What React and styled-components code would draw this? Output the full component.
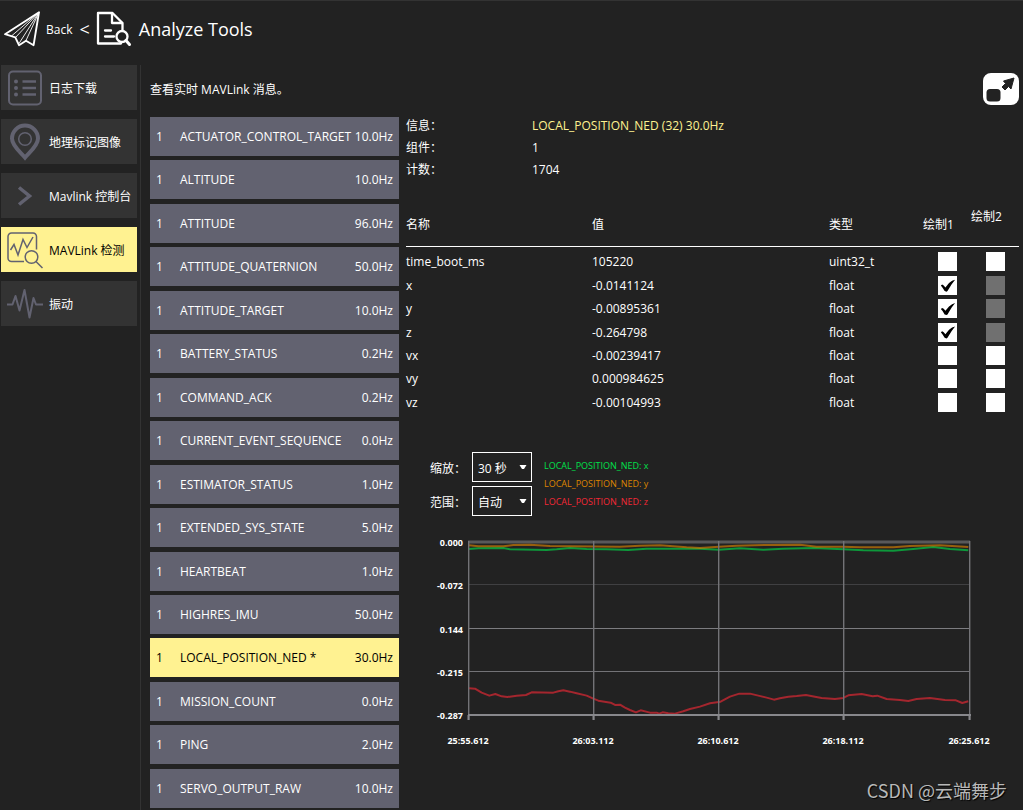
import { useState } from "react";
import styled, { createGlobalStyle } from "styled-components";

const messages = [
    { name: "ACTUATOR_CONTROL_TARGET", rate: "10.0Hz" },
    { name: "ALTITUDE", rate: "10.0Hz" },
    { name: "ATTITUDE", rate: "96.0Hz" },
    { name: "ATTITUDE_QUATERNION", rate: "50.0Hz" },
    { name: "ATTITUDE_TARGET", rate: "10.0Hz" },
    { name: "BATTERY_STATUS", rate: "0.2Hz" },
    { name: "COMMAND_ACK", rate: "0.2Hz" },
    { name: "CURRENT_EVENT_SEQUENCE", rate: "0.0Hz" },
    { name: "ESTIMATOR_STATUS", rate: "1.0Hz" },
    { name: "EXTENDED_SYS_STATE", rate: "5.0Hz" },
    { name: "HEARTBEAT", rate: "1.0Hz" },
    { name: "HIGHRES_IMU", rate: "50.0Hz" },
    { name: "LOCAL_POSITION_NED *", rate: "30.0Hz" },
    { name: "MISSION_COUNT", rate: "0.0Hz" },
    { name: "PING", rate: "2.0Hz" },
    { name: "SERVO_OUTPUT_RAW", rate: "10.0Hz" },
];

const fields = [
    { name: "time_boot_ms", value: "105220", type: "uint32_t" },
    { name: "x", value: "-0.0141124", type: "float", plotted: true },
    { name: "y", value: "-0.00895361", type: "float", plotted: true },
    { name: "z", value: "-0.264798", type: "float", plotted: true },
    { name: "vx", value: "-0.00239417", type: "float" },
    { name: "vy", value: "0.000984625", type: "float" },
    { name: "vz", value: "-0.00104993", type: "float" },
];

const series = [
    {
        label: "LOCAL_POSITION_NED: x",
        color: "#00e04b",
        points: "147,57 175,55 250,54 270,58 380,60 410,58 450,54 500,57 560,58 625,60 680,56 800,56 840,56 897,59 960,55 1030,59 1090,56 1180,54 1270,58 1330,61 1420,62 1480,57 1540,51 1590,57 1645,61",
    },
    {
        label: "LOCAL_POSITION_NED: y",
        color: "#de8500",
        points: "147,46 175,49 250,49 280,45 330,44 390,48 450,49 600,50 660,47 720,46 800,52 840,54 897,50 950,47 1040,45 1140,44 1190,50 1270,50 1320,52 1420,52 1470,48 1560,46 1645,51",
    },
    {
        label: "LOCAL_POSITION_NED: z",
        color: "#f32836",
        points: "147,475 165,476 185,488 208,497 226,492 245,499 262,501 290,497 318,495 335,487 400,488 415,484 430,481 450,485 470,490 500,497 520,506 535,512 572,518 585,525 600,524 615,533 630,540 648,547 662,541 690,548 710,548 718,551 728,547 745,550 765,551 790,544 810,537 840,530 870,520 902,515 930,500 958,491 990,491 1015,497 1040,503 1062,509 1080,505 1105,500 1130,498 1158,495 1185,500 1205,504 1245,507 1270,504 1285,496 1325,492 1358,499 1372,497 1400,507 1440,510 1465,513 1490,507 1530,504 1575,510 1608,511 1627,519 1645,514",
    },
];

const yTicks = [
    { label: "0.000", y: 11 },
    { label: "-0.072", y: 54 },
    { label: "0.144", y: 98 },
    { label: "-0.215", y: 141 },
    { label: "-0.287", y: 184 },
];

const xTicks = [
    { label: "25:55.612", x: 62 },
    { label: "26:03.112", x: 187 },
    { label: "26:10.612", x: 312 },
    { label: "26:18.112", x: 437 },
    { label: "26:25.612", x: 563 },
];

export default function App() {
    const [selected, setSelected] = useState("LOCAL_POSITION_NED *");

    return (
        <Page>
            <GlobalStyle />
            <Header>
                <BackButton>
                    <PlaneIcon />
                    Back
                </BackButton>
                <Separator>&lt;</Separator>
                <AnalyzeIcon />
                <Title>Analyze Tools</Title>
            </Header>

            <Body>
                <Sidebar>
                    <NavButton><ListIcon />日志下载</NavButton>
                    <NavButton><PinIcon />地理标记图像</NavButton>
                    <NavButton><ChevronIcon />Mavlink 控制台</NavButton>
                    <NavButton $active><InspectorIcon />MAVLink 检测</NavButton>
                    <NavButton><VibrationIcon />振动</NavButton>
                </Sidebar>

                <Main>
                    <TopRow>
                        <p>查看实时 MAVLink 消息。</p>
                        <PopoutButton aria-label="Popout"><PopoutIcon /></PopoutButton>
                    </TopRow>

                    <Columns>
                        <MessageList>
                            {messages.map((m) => (
                                <MessageButton
                                    key={m.name}
                                    $active={m.name === selected}
                                    onClick={() => setSelected(m.name)}
                                >
                                    <span>1</span>
                                    <span>{m.name}</span>
                                    <span>{m.rate}</span>
                                </MessageButton>
                            ))}
                        </MessageList>

                        <Details>
                            <Info>
                                <dt>信息：</dt>
                                <InfoName>LOCAL_POSITION_NED (32) 30.0Hz</InfoName>
                                <dt>组件：</dt>
                                <dd>1</dd>
                                <dt>计数：</dt>
                                <dd>1704</dd>
                            </Info>
                            <FieldTable />
                            <ChartControls>
                                <Selects>
                                    <label htmlFor="scale">缩放：</label>
                                    <Dropdown id="scale" options={["30 秒", "60 秒"]} />
                                    <label htmlFor="range">范围：</label>
                                    <Dropdown id="range" options={["自动", "0.1"]} />
                                </Selects>
                                <Legend>
                                    {series.map((s) => (
                                        <LegendItem key={s.label} $color={s.color}>{s.label}</LegendItem>
                                    ))}
                                </Legend>
                            </ChartControls>
                            <Chart />
                        </Details>
                    </Columns>
                </Main>
            </Body>
            <Watermark>CSDN @云端舞步</Watermark>
        </Page>
    );
}

function FieldTable() {
    return (
        <Table>
            <thead>
                <tr>
                    <NameHead>名称</NameHead>
                    <th>值</th>
                    <TypeHead>类型</TypeHead>
                    <PlotHead>绘制1</PlotHead>
                    <PlotHead $top>绘制2</PlotHead>
                </tr>
            </thead>
            <tbody>
                {fields.map((f) => (
                    <tr key={f.name}>
                        <td>{f.name}</td>
                        <td>{f.value}</td>
                        <td>{f.type}</td>
                        <td>
                            <Checkbox type="checkbox" aria-label={`绘制1 ${f.name}`} defaultChecked={f.plotted} />
                        </td>
                        <td>
                            <Checkbox type="checkbox" aria-label={`绘制2 ${f.name}`} disabled={f.plotted} />
                        </td>
                    </tr>
                ))}
            </tbody>
        </Table>
    );
}

function Dropdown({ id, options }) {
    return (
        <SelectBox>
            <select id={id}>
                {options.map((o) => <option key={o}>{o}</option>)}
            </select>
            <svg width="8" height="4" viewBox="0 0 8 4">
                <path d="M0.500 0h7L5 4H3z" fill="#fff" />
            </svg>
        </SelectBox>
    );
}

function Chart() {
    return (
        <ChartSvg viewBox="0 0 613 220">
            {/* horizontal grid */}
            <path d="M62 10H564" stroke="#58585a" strokeWidth="3" />
            <path d="M62 52.500H564" stroke="#404042" />
            <path d="M62 96.500H564" stroke="#7c7c80" />
            <path d="M62 139.500H564" stroke="#737377" />
            {series.map((s) => (
                <polyline
                    key={s.label}
                    points={s.points}
                    transform="translate(14 -2) scale(0.3333)"
                    fill="none"
                    stroke={s.color}
                    strokeOpacity="0.62"
                    strokeWidth="2"
                    strokeLinejoin="round"
                    vectorEffect="non-scaling-stroke"
                />
            ))}
            {xTicks.map((t) => (
                <g key={t.label}>
                    <path d={`M${t.x + 0.7} 9V188`} stroke="#737377" strokeWidth="1.400" />
                    <path d={`M${t.x + 0.5} 183V188`} stroke="#88888c" strokeWidth="2" />
                    <text x={t.x} y="212" textAnchor="middle">{t.label}</text>
                </g>
            ))}
            <path d="M62 183H565" stroke="#88888c" strokeWidth="2" />
            {yTicks.map((t) => (
                <text key={t.label} x="57" y={t.y + 3} textAnchor="end">{t.label}</text>
            ))}
        </ChartSvg>
    );
}

function PlaneIcon() {
    return (
        <svg width="38" height="38" viewBox="0 0 38 38" fill="none" stroke="#fff" strokeLinejoin="round">
            <path d="M1 24.200L35 2.200 29.600 35.200 22 30.800 15 35.200 11.300 27.300z" strokeWidth="1.900" />
            <path d="M35 2.200L7.500 26M35 2.200L11.500 27.500M35 2.200L15 33.500M35 2.200L22 30.500" strokeWidth="0.900" />
        </svg>
    );
}

function AnalyzeIcon() {
    return (
        <svg width="36" height="36" viewBox="0 0 36 36" fill="none" stroke="#fff" strokeWidth="2.300" strokeLinecap="round" strokeLinejoin="round">
            <path d="M25 32.500H2V2H16.500L26.500 12V19" />
            <path d="M16 2.500V12H26" />
            <path d="M9 19.500H15M9 25.500H18" />
            <circle cx="26" cy="25.500" r="5.500" />
            <path d="M30 29.500L33.500 33.500" strokeWidth="3" />
        </svg>
    );
}

function ListIcon() {
    return (
        <NavIcon viewBox="0 0 36 36">
            <rect x="2" y="1.500" width="32" height="33" rx="4" strokeWidth="2" />
            <path d="M15.500 11.500H29M15.500 18H29M15.500 24.500H29" strokeWidth="2.600" />
            <path d="M9 11.500h0M9 18h0M9 24.500h0" strokeWidth="4" strokeLinecap="round" />
        </NavIcon>
    );
}

function PinIcon() {
    return (
        <NavIcon viewBox="0 0 36 36">
            <path d="M18 33.500C14 28.500 5 22 5 14.500A13 13 0 0 1 31 14.500C31 22 22 28.500 18 33.500z" strokeWidth="4" />
            <circle cx="18" cy="15" r="6.300" strokeWidth="1.500" />
        </NavIcon>
    );
}

function ChevronIcon() {
    return (
        <NavIcon viewBox="0 0 36 36">
            <path d="M12 9.500L22.500 18 12 26.500" strokeWidth="3.500" />
        </NavIcon>
    );
}

function InspectorIcon() {
    return (
        <NavIcon viewBox="0 0 36 36" strokeWidth="1.500">
            <path d="M17 29.500H4.500A3.500 3.500 0 0 1 1 26V4.500A3.500 3.500 0 0 1 4.500 1H26A3.500 3.500 0 0 1 29.500 4.500V17.500" />
            <path d="M3.500 18L7 12.500 11 23 16 7.500 20 15.500 26 5" />
            <circle cx="24.500" cy="25" r="6.300" />
            <path d="M29 29.500L35.500 36" />
        </NavIcon>
    );
}

function VibrationIcon() {
    return (
        <NavIcon viewBox="0 0 36 36" strokeWidth="2">
            <path d="M0 18.500H5.500L8.500 10 12.500 24.500 17.500 4 22.500 31.500 26.500 12 29 18.500H36" strokeLinejoin="round" />
        </NavIcon>
    );
}

function PopoutIcon() {
    return (
        <svg width="36" height="32" viewBox="0 0 36 32">
            <rect x="3.500" y="16" width="14" height="12.500" rx="3.500" fill="#222" />
            <path d="M31 5L20.500 8 22.500 10.500 19 14 22 17 25.500 13.500 28 16z" fill="#222" stroke="#222" strokeLinejoin="round" />
        </svg>
    );
}

const GlobalStyle = createGlobalStyle`
    * {
        box-sizing: border-box;
    }

    body {
        margin: 0;
        background-color: #222222;
    }

    body, button, select {
        font-family: "Open Sans", "Noto Sans CJK SC", sans-serif;
        font-size: 12px;
        color: white;
    }

    p, h1, dl, dd, ul {
        margin: 0;
        padding: 0;
    }

    button {
        border: none;
        padding: 0;
        cursor: pointer;
    }
`

const Page = styled.div`
    position: relative;
    min-height: 100vh;
    display: flex;
    flex-direction: column;
    border-top: 1px solid #333333;
`

const Header = styled.header`
    height: 56px;
    display: flex;
    align-items: center;
    padding-left: 4px;
    margin-bottom: 8px;
`

const BackButton = styled.button`
    display: flex;
    align-items: center;
    gap: 4px;
    background: none;
`

const Separator = styled.span`
    font-size: 18px;
    margin: 0 6px 0 7px;
`

const Title = styled.h1`
    font-size: 18px;
    font-weight: normal;
    margin-left: 7px;
`

const Body = styled.div`
    flex: 1;
    display: flex;
`

const Sidebar = styled.nav`
    width: 141px;
    flex-shrink: 0;
    display: flex;
    flex-direction: column;
    gap: 9px;
    padding: 0 3px 0 1px;
    border-right: 1px solid #333333;
`

const NavButton = styled.button`
    height: 45px;
    display: flex;
    align-items: center;
    gap: 6px;
    padding-left: 6px;
    background-color: ${(props) => (props.$active ? "#fff291" : "#333333")};
    color: ${(props) => (props.$active ? "black" : "white")};
    white-space: nowrap;
`

const NavIcon = styled.svg`
    width: 36px;
    height: 36px;
    flex-shrink: 0;
    overflow: visible;
    fill: none;
    stroke: #626270;
`

const Main = styled.main`
    flex: 1;
    display: flex;
    flex-direction: column;
    padding: 8px 4px 2px 9px;
`

const TopRow = styled.div`
    height: 32px;
    display: flex;
    align-items: center;
    justify-content: space-between;
    margin-bottom: 12px;
`

const PopoutButton = styled.button`
    width: 36px;
    height: 32px;
    background-color: white;
    border-radius: 8px;
`

const Columns = styled.div`
    flex: 1;
    display: flex;
    gap: 7px;
`

const MessageList = styled.div`
    width: 249px;
    flex-shrink: 0;
    display: flex;
    flex-direction: column;
    justify-content: space-between;
`

const MessageButton = styled.button`
    height: 39px;
    display: grid;
    grid-template-columns: 24px 1fr auto;
    align-items: center;
    padding: 0 6px;
    text-align: left;
    background-color: ${(props) => (props.$active ? "#fff291" : "#626270")};
    color: ${(props) => (props.$active ? "black" : "white")};
`

const Details = styled.section`
    flex: 1;
    min-width: 0;
`

const Info = styled.dl`
    display: grid;
    grid-template-columns: 126px 1fr;
    row-gap: 4px;
    line-height: 18px;
    margin-bottom: 23px;
`

const InfoName = styled.dd`
    color: #fff291;
`

const Table = styled.table`
    width: 100%;
    height: 212px;
    table-layout: fixed;
    border-collapse: collapse;

    th {
        height: 44px;
        padding: 0;
        text-align: left;
        font-weight: normal;
        border-bottom: 1px solid white;
    }

    td {
        padding: 0;
        line-height: 17px;
    }

    tbody tr:first-child td {
        padding-top: 3px;
    }
`

const NameHead = styled.th`
    width: 186px;
`

const TypeHead = styled.th`
    width: 94px;
`

const PlotHead = styled.th`
    width: 48px;
    vertical-align: ${(props) => (props.$top ? "top" : "middle")};
    padding-top: ${(props) => (props.$top ? "5px" : "0")} !important;
`

const Checkbox = styled.input`
    appearance: none;
    display: block;
    width: 19px;
    height: 19px;
    margin: 0 0 0 15px;
    background-color: white;

    &:disabled {
        background-color: #707070;
    }

    &:checked::before {
        content: "";
        display: block;
        width: 19px;
        height: 19px;
        background-color: black;
        clip-path: polygon(15% 51%, 22% 46%, 30% 50%, 39% 61%, 58% 38%, 74% 26%, 90% 20%, 72% 44%, 50% 80%, 45% 83%, 35% 80%, 24% 62%);
    }
`

const ChartControls = styled.div`
    display: flex;
    align-items: center;
    gap: 12px;
    margin: 38px 0 16px 24px;
`

const Selects = styled.div`
    display: grid;
    grid-template-columns: 42px 60px;
    align-items: center;
    gap: 4px 0;

    label {
        padding-top: 2px;
    }
`

const SelectBox = styled.div`
    position: relative;

    select {
        appearance: none;
        display: block;
        width: 100%;
        height: 30px;
        padding: 2px 5px 0;
        background-color: #222222;
        border: 1px solid white;
        border-radius: 0;
    }

    svg {
        position: absolute;
        top: 13px;
        right: 5px;
        pointer-events: none;
    }
`

const Legend = styled.ul`
    list-style: none;
    font-size: 9px;
    line-height: 18px;
`

const LegendItem = styled.li`
    color: ${(props) => props.$color};
`

const ChartSvg = styled.svg`
    display: block;
    width: 100%;

    text {
        fill: white;
        font-size: 9px;
        font-weight: bold;
    }
`

const Watermark = styled.div`
    position: absolute;
    right: 16px;
    bottom: 7px;
    font-family: "Noto Sans CJK SC", sans-serif;
    font-size: 18px;
    color: #b8b8b8;
    text-shadow: 1px 1px 1px black;
`
